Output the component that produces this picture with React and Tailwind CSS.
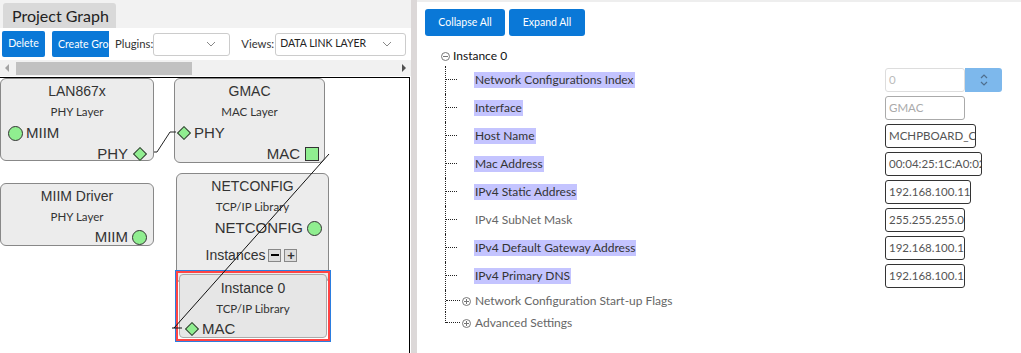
import React from "react";

const ui = { fontFamily: 'Lato, "Noto Sans", sans-serif' };
const arial = { fontFamily: '"Liberation Sans", Arial, sans-serif' };

function Circle() {
    return <span className="inline-block w-[15px] h-[15px] rounded-full bg-[#90ee90] border border-[#333]" />;
}

function Diamond() {
    return (
        <span className="inline-flex w-[14px] h-[14px] items-center justify-center">
            <span className="block w-[10px] h-[10px] rotate-45 bg-[#90ee90] border border-[#333]" />
        </span>
    );
}

function Square() {
    return <span className="inline-block w-[14px] h-[14px] bg-[#90ee90] border border-[#333]" />;
}

function Node({ className, title, sub, children }) {
    return (
        <div className={"absolute rounded-[6px] border border-[#888] bg-[#ececec] text-[#333] " + className}>
            <div className="text-center text-[14px] leading-[16px] mt-[4px]" style={arial}>{title}</div>
            <div className="text-center text-[11.5px] leading-[14px] mt-[6px]" style={ui}>{sub}</div>
            {children}
        </div>
    );
}

function Chevron({ className }) {
    return (
        <svg className={className} width="10" height="6" viewBox="0 0 10 6">
            <path d="M1 1 L5 5 L9 1" fill="none" stroke="#888" strokeWidth="1" />
        </svg>
    );
}

function ProjectGraph() {
    return (
        <div className="w-[411px] h-full flex flex-col bg-white" style={ui}>
            <div className="h-[28px] bg-[#f2f2f2] pt-[3px] pl-[3px]">
                <div className="w-[113px] h-[25px] bg-[#d9d9d9] rounded-t-[3px] text-[16px] leading-[25px] pl-[9px] text-[#222] whitespace-nowrap">
                    Project Graph
                </div>
            </div>
            <div className="h-[32px] flex items-center text-[11.3px] text-[#333]">
                <button className="ml-[2px] w-[43px] h-[26px] bg-[#0a78d7] text-white text-[10.5px] rounded-[2px]">Delete</button>
                <div className="ml-[7px] w-[57px] h-[26px] overflow-hidden bg-[#0a78d7] text-white text-[10.5px] rounded-l-[2px] leading-[26px] pl-[6px] whitespace-nowrap">
                    Create Group
                </div>
                <span className="ml-[6px]">Plugins:</span>
                <div className="w-[77px] h-[23px] border border-[#ccc] rounded-[3px] bg-white flex items-center justify-end pr-[13px]">
                    <Chevron />
                </div>
                <span className="ml-[11px]">Views:</span>
                <div className="ml-[1px] w-[131px] h-[23px] border border-[#ccc] rounded-[3px] bg-white flex items-center justify-between pl-[4px] pr-[13px]">
                    <span className="text-[10.5px] text-[#222] whitespace-nowrap">DATA LINK LAYER</span>
                    <Chevron />
                </div>
            </div>
            <div className="h-[16px] bg-[#f1f1f1] flex items-center relative">
                <span className="ml-[5px] w-0 h-0 border-y-[4px] border-y-transparent border-r-[4px] border-r-[#a3a3a3]" />
                <div className="ml-[7px] w-[176px] h-[13px] bg-[#c1c1c1]" />
                <span className="ml-auto mr-[5px] w-0 h-0 border-y-[4px] border-y-transparent border-l-[4px] border-l-[#505050]" />
            </div>
            <div className="h-[1px] bg-white" />
            <div className="relative flex-1 border-t border-r border-black mr-[1px] overflow-hidden">
                <Node className="left-0 top-[0px] w-[154px] h-[83px]" title="LAN867x" sub="PHY Layer">
                    <div className="flex items-center gap-[3px] pl-[7px] mt-[5px] text-[15px] leading-[18px]" style={arial}>
                        <Circle /> MIIM
                    </div>
                    <div className="flex items-center justify-end gap-[5px] pr-[6px] mt-[3px] text-[15px] leading-[18px]" style={arial}>
                        PHY <Diamond />
                    </div>
                </Node>
                <Node className="left-[174px] top-[0px] w-[151px] h-[85px]" title="GMAC" sub="MAC Layer">
                    <div className="flex items-center gap-[3px] pl-[2px] mt-[5px] text-[15px] leading-[18px]" style={arial}>
                        <Diamond /> PHY
                    </div>
                    <div className="flex items-center justify-end gap-[5px] pr-[5px] mt-[3px] text-[15px] leading-[18px]" style={arial}>
                        MAC <Square />
                    </div>
                </Node>
                <Node className="left-0 top-[105px] w-[154px] h-[63px]" title="MIIM Driver" sub="PHY Layer">
                    <div className="flex items-center justify-end gap-[4px] pr-[6px] mt-[4px] text-[15px] leading-[18px]" style={arial}>
                        MIIM <Circle />
                    </div>
                </Node>
                <Node className="left-[176px] top-[95px] w-[153px] h-[110px]" title="NETCONFIG" sub="TCP/IP Library">
                    <div className="flex items-center justify-end gap-[4px] pr-[6px] mt-[5px] text-[15px] leading-[18px]" style={arial}>
                        NETCONFIG <Circle />
                    </div>
                    <div className="flex items-center justify-center gap-[3px] mt-[9px] pr-[2px] text-[14px] leading-[18px]" style={arial}>
                        Instances
                        <span className="w-[13px] h-[13px] border border-[#888] bg-[#ddd] flex items-center justify-center">
                            <span className="w-[8px] h-[2px] bg-black" />
                        </span>
                        <span className="w-[13px] h-[13px] border border-[#888] bg-[#ddd] flex items-center justify-center text-[13px] font-bold leading-none">+</span>
                    </div>
                </Node>
                <div className="absolute left-[175px] top-[192px] w-[156px] h-[72px] border border-[#2b7de0]">
                    <div className="w-full h-full border-2 border-[#ff4444] p-[1px]">
                        <div className="w-full h-full rounded-[4px] border border-[#aaa] bg-[#e6e6e6] text-[#333]">
                            <div className="text-center text-[14px] leading-[16px] mt-[5px]" style={arial}>Instance 0</div>
                            <div className="text-center text-[11.5px] leading-[14px] mt-[6px]" style={ui}>TCP/IP Library</div>
                            <div className="flex items-center gap-[3px] pl-[5px] mt-[4px] text-[15px] leading-[18px]" style={arial}>
                                <Diamond /> MAC
                            </div>
                        </div>
                    </div>
                </div>
                <svg className="absolute left-0 top-0 pointer-events-none" width="411" height="280">
                    <polyline points="154,74 157,74 170,54 176,54" fill="none" stroke="#222" strokeWidth="1" />
                    <line x1="329" y1="76" x2="174" y2="250" stroke="#111" strokeWidth="1" />
                    <line x1="172" y1="250" x2="182" y2="250" stroke="#111" strokeWidth="1" />
                </svg>
            </div>
        </div>
    );
}

function Field({ value, width, disabled, light }) {
    const border = light ? "border-[#ddd] text-[#bbb]" : disabled ? "border-[#aaa] text-[#aaa]" : "border-[#333] text-[#555]";
    return (
        <div className={"h-[24px] border rounded-[3px] bg-white px-[3px] text-[11.5px] leading-[22px] overflow-hidden whitespace-nowrap " + border} style={{ width }}>
            {value}
        </div>
    );
}

const rows = [
    { label: "Network Configurations Index", value: "0", width: 80, light: true, spin: true, hl: true },
    { label: "Interface", value: "GMAC", width: 80, disabled: true, hl: true },
    { label: "Host Name", value: "MCHPBOARD_C", width: 91, hl: true },
    { label: "Mac Address", value: "00:04:25:1C:A0:02", width: 97, hl: true },
    { label: "IPv4 Static Address", value: "192.168.100.11", width: 86, hl: true },
    { label: "IPv4 SubNet Mask", value: "255.255.255.0", width: 80 },
    { label: "IPv4 Default Gateway Address", value: "192.168.100.1", width: 80, hl: true },
    { label: "IPv4 Primary DNS", value: "192.168.100.1", width: 80, hl: true },
];

function TreeRow({ row }) {
    return (
        <div className="h-[28px] flex items-center">
            <div className="relative w-[29px] h-full border-l border-dotted border-[#222]">
                <div className="absolute left-0 top-[13px] w-[11px] border-t border-dotted border-[#222]" />
            </div>
            <div className="w-[411px] flex">
                <span className={"inline-block h-[16px] text-[12px] leading-[16px] px-[1px] " + (row.hl ? "bg-[#c4c4ff] text-[#333]" : "text-[#666]")}>
                    {row.label}
                </span>
            </div>
            <Field value={row.value} width={row.width} disabled={row.disabled} light={row.light} />
            {row.spin && (
                <div className="w-[37px] h-[24px] bg-[#7db8ec] rounded-r-[3px] flex flex-col items-center justify-center gap-[2px]">
                    <svg width="8" height="5" viewBox="0 0 8 5"><path d="M1 4 L4 1 L7 4" fill="none" stroke="#4f6f8f" strokeWidth="1.2" /></svg>
                    <svg width="8" height="5" viewBox="0 0 8 5"><path d="M1 1 L4 4 L7 1" fill="none" stroke="#4f6f8f" strokeWidth="1.2" /></svg>
                </div>
            )}
        </div>
    );
}

function PlusCircle({ minus }) {
    return (
        <span className="inline-flex w-[9px] h-[9px] rounded-full border border-[#777] items-center justify-center relative">
            <span className="absolute w-[5px] h-[1px] bg-[#777]" />
            {!minus && <span className="absolute w-[1px] h-[5px] bg-[#777]" />}
        </span>
    );
}

function Collapsed({ label, last }) {
    return (
        <div className="h-[22px] flex items-center">
            <div className={"relative w-[14px] border-l border-dotted border-[#222] " + (last ? "h-[11px] self-start" : "h-full")}>
                <div className="absolute left-0 top-[10px] w-[14px] border-t border-dotted border-[#222]" />
            </div>
            <span className="ml-[3px] flex"><PlusCircle /></span>
            <span className="ml-[4px] text-[12px] text-[#666]">{label}</span>
        </div>
    );
}

function Properties() {
    return (
        <div className="flex-1 h-full bg-white border-t-2 border-[#eee]" style={ui}>
            <div className="flex gap-[4px] pl-[8px] pt-[7px]">
                <button className="w-[80px] h-[27px] bg-[#0a78d7] text-white text-[10.5px] rounded-[3px]">Collapse All</button>
                <button className="w-[76px] h-[27px] bg-[#0a78d7] text-white text-[10.5px] rounded-[3px]">Expand All</button>
            </div>
            <div className="ml-[24px] mt-[10px] h-[20px] flex items-center gap-[3px]">
                <PlusCircle minus />
                <span className="text-[12px] text-[#111]">Instance 0</span>
            </div>
            <div className="ml-[28px]">
                {rows.map((r) => (
                    <TreeRow key={r.label} row={r} />
                ))}
                <Collapsed label="Network Configuration Start-up Flags" />
                <Collapsed label="Advanced Settings" last />
            </div>
        </div>
    );
}

export default function App() {
    return (
        <div className="w-[1021px] h-[353px] flex overflow-hidden bg-white">
            <ProjectGraph />
            <div className="w-[6px] h-full bg-[#dcd8d8]" />
            <Properties />
        </div>
    );
}
